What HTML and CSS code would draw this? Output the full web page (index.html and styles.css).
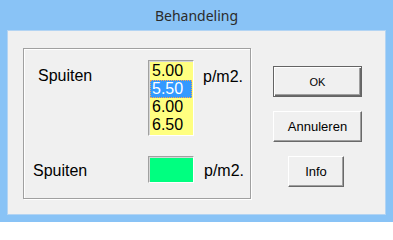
FILE: index.html
```html
<!DOCTYPE html>
<html>
<head>
<meta charset="utf-8">
<link rel="stylesheet" href="styles.css">
</head>
<body>
<div class="window">
  <div class="titlebar">Behandeling</div>
  <div class="client">
    <div class="group">
      <div class="row row-list">
        <span class="label label-1">Spuiten</span>
        <div class="listbox">
          <div class="item">5.00</div>
          <div class="item selected">5.50</div>
          <div class="item">6.00</div>
          <div class="item">6.50</div>
        </div>
        <span class="unit unit-1">p/m2.</span>
      </div>
      <div class="row row-color">
        <span class="label label-2">Spuiten</span>
        <div class="swatch"></div>
        <span class="unit unit-2">p/m2.</span>
      </div>
    </div>
    <div class="buttons">
      <button class="btn btn-default">OK</button>
      <button class="btn btn-wide">Annuleren</button>
      <button class="btn btn-info">Info</button>
    </div>
  </div>
</div>
</body>
</html>
```
FILE: styles.css
```css
html, body {
  margin: 0;
  padding: 0;
}
body {
  width: 393px;
  height: 222px;
  overflow: hidden;
  font-family: "Liberation Sans", Arial, sans-serif;
}
.window {
  width: 393px;
  height: 222px;
  box-sizing: border-box;
  background: #89c3f6;
  display: flex;
  flex-direction: column;
  padding: 0 7px 7px 7px;
}
.titlebar {
  height: 30px;
  flex: none;
  display: flex;
  align-items: center;
  justify-content: center;
  font-family: "Noto Sans", "Open Sans", sans-serif;
  font-size: 14px;
  color: #2b2b2b;
  padding-top: 1px;
  box-sizing: border-box;
}
.client {
  flex: 1;
  background: #f0f0f0;
  border: 1px solid #b3d4f3;
  display: flex;
  align-items: flex-start;
  padding: 17px 0 0 15px;
}
.group {
  width: 228px;
  height: 151px;
  box-sizing: border-box;
  border: 1px solid #a0a0a0;
  box-shadow: inset 1px 1px #ffffff, 1px 1px #ffffff;
  flex: none;
}
.row {
  display: flex;
  font-size: 16px;
  color: #000;
}
.row-list {
  margin-top: 11px;
  align-items: flex-start;
}
.row-color {
  margin-top: 20px;
  align-items: center;
}
.label, .unit {
  line-height: 20px;
}
.label-1 {
  margin-left: 14px;
  width: 110px;
  margin-top: 6px;
}
.unit-1 {
  margin-left: 9px;
  margin-top: 7px;
}
.label-2 {
  margin-left: 9px;
  width: 115px;
  margin-top: 3px;
}
.unit-2 {
  margin-left: 10px;
  margin-top: 3px;
}
.listbox {
  width: 46px;
  height: 76px;
  box-sizing: border-box;
  border-style: solid;
  border-width: 1px;
  border-color: #a0a0a0 #ffffff #ffffff #a0a0a0;
  box-shadow: inset 1px 1px #d6d6d6;
  background: #ffff80;
  padding: 1px 1px 0 1px;
}
.item {
  height: 18px;
  line-height: 18px;
  padding-left: 2px;
  background: #ffff80;
  color: #000;
}
.item.selected {
  background: #3399ff;
  color: #ffffff;
  outline: 1px dotted #f5a65b;
  outline-offset: -1px;
}
.swatch {
  width: 46px;
  height: 27px;
  box-sizing: border-box;
  border-style: solid;
  border-width: 1px;
  border-color: #a0a0a0 #ffffff #ffffff #a0a0a0;
  box-shadow: inset 1px 1px #d6d6d6;
  background: #00ff80;
}
.buttons {
  display: flex;
  flex-direction: column;
  align-items: flex-start;
  margin-left: 22px;
  padding-top: 18px;
  gap: 14px;
}
.btn {
  height: 31px;
  box-sizing: border-box;
  background: #f0f0f0;
  font-family: "Liberation Sans", Arial, sans-serif;
  font-size: 13px;
  color: #000;
  padding: 0;
  margin: 0;
  border-style: solid;
  border-width: 1px;
  border-color: #ffffff #696969 #696969 #ffffff;
  box-shadow: inset -1px -1px #a0a0a0;
}
.btn-wide {
  width: 89px;
}
.btn-default {
  width: 89px;
  font-size: 11px;
  border: 1px solid #646464;
  box-shadow: inset 1px 1px #ffffff, inset -1px -1px #696969, inset -2px -2px #a0a0a0;
}
.btn-info {
  width: 56px;
  margin-left: 15px;
}
```
